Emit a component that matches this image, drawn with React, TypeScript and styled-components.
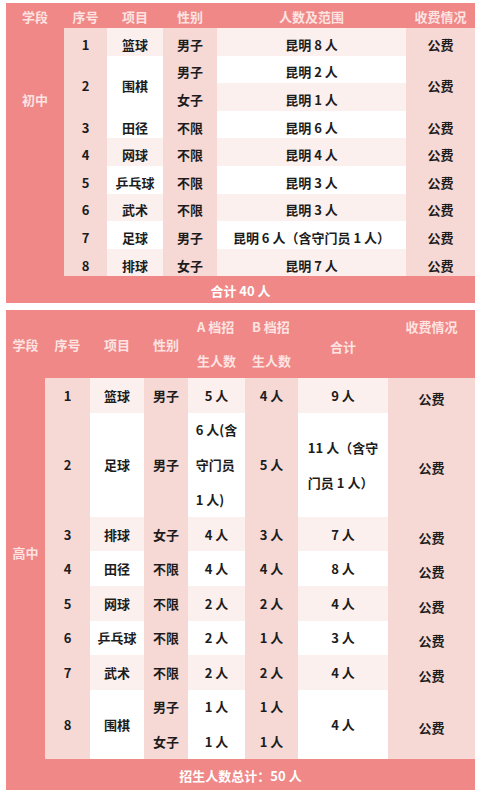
import React from 'react';
import styled, { createGlobalStyle } from 'styled-components';

const GlobalStyle = createGlobalStyle`
  html, body {
    margin: 0;
    padding: 0;
    background: #ffffff;
  }
  body {
    font-family: "Noto Sans CJK SC", "Noto Sans", sans-serif;
  }
`;

const PINK = '#ef8886';
const LIGHT = '#f6d8d5';
const TINT = '#fcf0ef';
const WHITE = '#ffffff';

type Tone = 'none' | 'light' | 'tint' | 'white';

const toneColor: Record<Tone, string> = {
  none: 'transparent',
  light: LIGHT,
  tint: TINT,
  white: WHITE,
};

const Page = styled.div`
  display: flex;
  flex-direction: column;
  gap: 7px;
  padding: 3px 6px;
  width: 469px;
`;

const Table = styled.div<{ $cols: string; $rows: string }>`
  display: grid;
  grid-template-columns: ${(p) => p.$cols};
  grid-template-rows: ${(p) => p.$rows};
  background: ${PINK};
  font-size: 13px;
  font-weight: 700;
`;

const Cell = styled.div<{
  $r: number;
  $c: number;
  $rs?: number;
  $cs?: number;
  $tone?: Tone;
  $dy?: number;
}>`
  grid-row: ${(p) => p.$r} / span ${(p) => p.$rs ?? 1};
  grid-column: ${(p) => p.$c} / span ${(p) => p.$cs ?? 1};
  background: ${(p) => toneColor[p.$tone ?? 'none']};
  display: flex;
  align-items: center;
  justify-content: center;
  text-align: center;
  color: #1c1c1c;
  padding-top: ${(p) => p.$dy ?? 0}px;
  box-sizing: border-box;
  white-space: nowrap;
`;

const HeadCell = styled(Cell)<{ $top?: boolean }>`
  color: #fde3e2;
  align-items: ${(p) => (p.$top ? 'flex-start' : 'center')};
  line-height: ${(p) => (p.$top ? '34px' : 'normal')};
`;

const StageCell = styled(Cell)<{ $offset: number }>`
  color: #fde3e2;
  align-items: flex-start;
  padding-top: ${(p) => p.$offset}px;
`;

const FootCell = styled(Cell)`
  color: #ffffff;
  padding-top: 2px;
`;

const Lines = styled.div<{ $lh: number }>`
  display: inline-block;
  text-align: left;
  line-height: ${(p) => p.$lh}px;
`;

type Val = string | string[];

const renderVal = (v: Val, lh: number) =>
  Array.isArray(v) ? (
    <Lines $lh={lh}>
      {v.map((l, i) => (
        <div key={i}>{l}</div>
      ))}
    </Lines>
  ) : (
    v
  );

/* ---------- table 1: 初中 ---------- */

interface JuniorRow {
  no: string;
  item: string;
  sex: string[];
  range: string[];
}

const juniorRows: JuniorRow[] = [
  { no: '1', item: '篮球', sex: ['男子'], range: ['昆明 8 人'] },
  { no: '2', item: '围棋', sex: ['男子', '女子'], range: ['昆明 2 人', '昆明 1 人'] },
  { no: '3', item: '田径', sex: ['不限'], range: ['昆明 6 人'] },
  { no: '4', item: '网球', sex: ['不限'], range: ['昆明 4 人'] },
  { no: '5', item: '乒乓球', sex: ['不限'], range: ['昆明 3 人'] },
  { no: '6', item: '武术', sex: ['不限'], range: ['昆明 3 人'] },
  { no: '7', item: '足球', sex: ['男子'], range: ['昆明 6 人（含守门员 1 人）'] },
  { no: '8', item: '排球', sex: ['女子'], range: ['昆明 7 人'] },
];

const juniorHead = ['学段', '序号', '项目', '性别', '人数及范围', '收费情况'];

const JuniorTable = () => {
  const cells: React.ReactNode[] = [];
  let sub = 0;
  juniorRows.forEach((row) => {
    const units = row.range.length;
    const r = sub + 2;
    const stripe = (k: number): Tone => (k % 2 === 0 ? 'tint' : 'white');
    cells.push(
      <Cell key={`n${row.no}`} $r={r} $rs={units} $c={2} $tone="light" $dy={5}>
        {row.no}
      </Cell>,
      <Cell key={`i${row.no}`} $r={r} $rs={units} $c={3} $tone={stripe(sub)} $dy={5}>
        {row.item}
      </Cell>,
      <Cell key={`f${row.no}`} $r={r} $rs={units} $c={6} $tone="light" $dy={5}>
        公费
      </Cell>
    );
    for (let u = 0; u < units; u++) {
      const sx = row.sex.length === units ? row.sex[u] : row.sex[0];
      if (row.sex.length === units || u === 0) {
        cells.push(
          <Cell
            key={`s${row.no}-${u}`}
            $r={r + u}
            $rs={row.sex.length === units ? 1 : units}
            $c={4}
            $tone="light"
            $dy={5}
          >
            {sx}
          </Cell>
        );
      }
      cells.push(
        <Cell key={`g${row.no}-${u}`} $r={r + u} $c={5} $tone={stripe(sub + u)} $dy={5}>
          {row.range[u]}
        </Cell>
      );
    }
    sub += units;
  });

  return (
    <Table $cols="58px 43px 56px 54px 189px 69px" $rows="25px repeat(9, 27.6px) 27px">
      {juniorHead.map((h, i) => (
        <HeadCell key={h} $r={1} $c={i + 1} $dy={2}>
          {h}
        </HeadCell>
      ))}
      <StageCell $r={2} $rs={9} $c={1} $offset={62}>
        初中
      </StageCell>
      {cells}
      <FootCell $r={11} $c={1} $cs={6}>
        合计 40 人
      </FootCell>
    </Table>
  );
};

/* ---------- table 2: 高中 ---------- */

interface SeniorRow {
  no: string;
  item: string;
  units: number;
  sex: Val[];
  a: Val[];
  b: Val[];
  total: Val;
}

const seniorRows: SeniorRow[] = [
  { no: '1', item: '篮球', units: 1, sex: ['男子'], a: ['5 人'], b: ['4 人'], total: '9 人' },
  {
    no: '2',
    item: '足球',
    units: 3,
    sex: ['男子'],
    a: [['6 人(含', '守门员', '1 人)']],
    b: ['5 人'],
    total: ['11 人（含守', '门员 1 人）'],
  },
  { no: '3', item: '排球', units: 1, sex: ['女子'], a: ['4 人'], b: ['3 人'], total: '7 人' },
  { no: '4', item: '田径', units: 1, sex: ['不限'], a: ['4 人'], b: ['4 人'], total: '8 人' },
  { no: '5', item: '网球', units: 1, sex: ['不限'], a: ['2 人'], b: ['2 人'], total: '4 人' },
  { no: '6', item: '乒乓球', units: 1, sex: ['不限'], a: ['2 人'], b: ['1 人'], total: '3 人' },
  { no: '7', item: '武术', units: 1, sex: ['不限'], a: ['2 人'], b: ['2 人'], total: '4 人' },
  {
    no: '8',
    item: '围棋',
    units: 2,
    sex: ['男子', '女子'],
    a: ['1 人', '1 人'],
    b: ['1 人', '1 人'],
    total: '4 人',
  },
];

const SeniorTable = () => {
  const cells: React.ReactNode[] = [];
  let r = 2;
  seniorRows.forEach((row, idx) => {
    const stripe: Tone = idx % 2 === 0 ? 'tint' : 'white';
    const rs = row.units;
    cells.push(
      <Cell key={`n${row.no}`} $r={r} $rs={rs} $c={2} $tone="light">
        {row.no}
      </Cell>,
      <Cell key={`i${row.no}`} $r={r} $rs={rs} $c={3} $tone={stripe}>
        {row.item}
      </Cell>,
      <Cell key={`t${row.no}`} $r={r} $rs={rs} $c={7} $tone={stripe}>
        {renderVal(row.total, 35)}
      </Cell>,
      <Cell key={`f${row.no}`} $r={r} $rs={rs} $c={8} $tone="light" $dy={6}>
        公费
      </Cell>
    );
    const cols: [Val[], number, Tone][] = [
      [row.sex, 4, 'light'],
      [row.a, 5, stripe],
      [row.b, 6, 'light'],
    ];
    cols.forEach(([vals, c, tone]) => {
      const split = vals.length === rs;
      vals.forEach((v, u) => (
        cells.push(
          <Cell
            key={`c${row.no}-${c}-${u}`}
            $r={r + u}
            $rs={split ? 1 : rs}
            $c={c}
            $tone={tone}
          >
            {renderVal(v, 35)}
          </Cell>
        )
      ));
    });
    r += rs;
  });

  return (
    <Table
      $cols="39px 45px 54px 44px 57px 53px 90px 87px"
      $rows="68px repeat(11, 34.6px) 31px"
    >
      <HeadCell $r={1} $c={1}>学段</HeadCell>
      <HeadCell $r={1} $c={2}>序号</HeadCell>
      <HeadCell $r={1} $c={3}>项目</HeadCell>
      <HeadCell $r={1} $c={4}>性别</HeadCell>
      <HeadCell $r={1} $c={5}>{renderVal(['A 档招', '生人数'], 34)}</HeadCell>
      <HeadCell $r={1} $c={6}>{renderVal(['B 档招', '生人数'], 34)}</HeadCell>
      <HeadCell $r={1} $c={7} $dy={4}>合计</HeadCell>
      <HeadCell $r={1} $c={8} $top>收费情况</HeadCell>
      <StageCell $r={2} $rs={11} $c={1} $offset={165}>
        高中
      </StageCell>
      {cells}
      <FootCell $r={13} $c={1} $cs={8}>
        招生人数总计：50 人
      </FootCell>
    </Table>
  );
};

export default function App() {
  return (
    <>
      <GlobalStyle />
      <Page>
        <JuniorTable />
        <SeniorTable />
      </Page>
    </>
  );
}
